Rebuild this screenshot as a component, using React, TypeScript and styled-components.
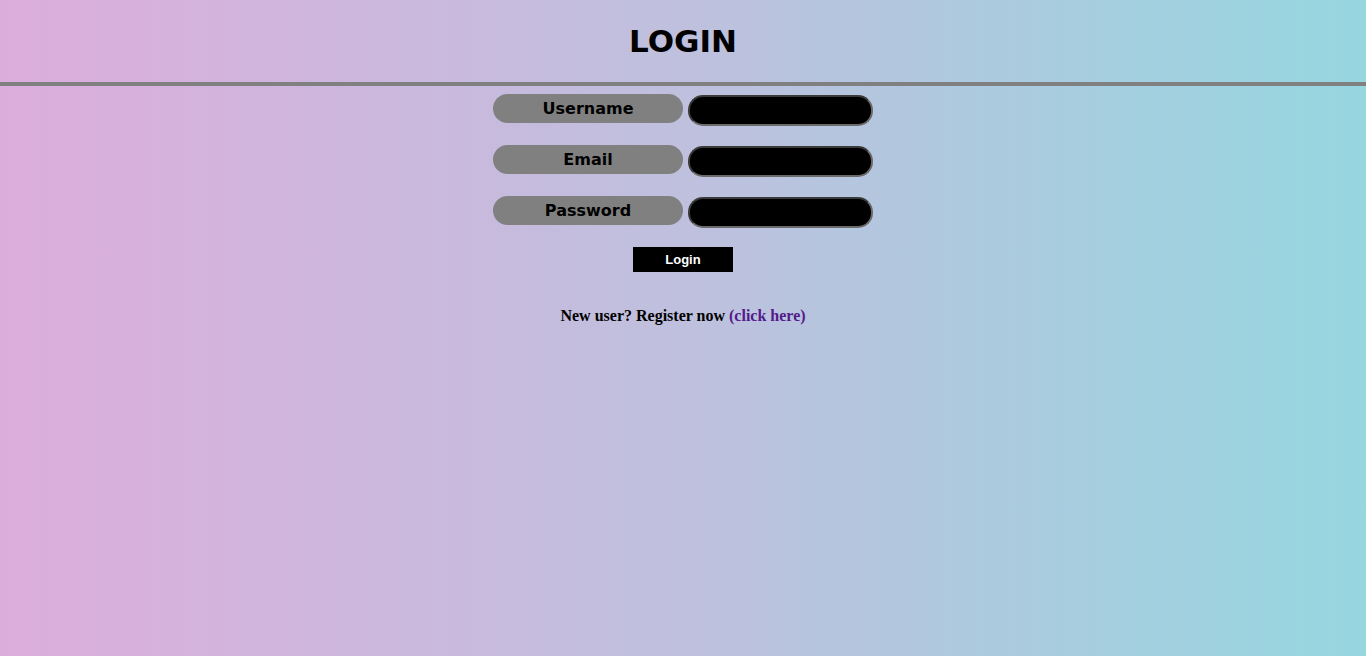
import React from "react";
import styled, { createGlobalStyle } from "styled-components";

const Global = createGlobalStyle`
  html, body { margin: 0; padding: 0; }
  body {
    min-height: 656px;
    background: linear-gradient(to right, #dcaddb, #bfc0de 50%, #96d7e0);
    font-family: "Liberation Serif", serif;
  }
`;

const Page = styled.div`
  min-height: 656px;
  display: flex;
  flex-direction: column;
  align-items: center;
`;

const Title = styled.h1`
  margin: 0;
  padding-top: 22px;
  height: 82px;
  box-sizing: border-box;
  font-family: "DejaVu Sans", sans-serif;
  font-weight: bold;
  font-size: 31px;
  letter-spacing: 0;
  color: #000;
  line-height: 38px;
`;

const Rule = styled.div`
  align-self: stretch;
  height: 4px;
  background: #808080;
`;

const Form = styled.form`
  display: flex;
  flex-direction: column;
  align-items: center;
  padding-top: 8px;
`;

const Row = styled.div`
  display: flex;
  align-items: flex-start;
  gap: 5px;
  height: 51px;
`;

const Label = styled.label`
  width: 190px;
  height: 29px;
  border-radius: 15px;
  background: #808080;
  color: #000;
  font-family: "DejaVu Sans", sans-serif;
  font-weight: bold;
  font-size: 16px;
  display: flex;
  align-items: center;
  justify-content: center;
`;

const Input = styled.input`
  margin-top: 1px;
  width: 185px;
  height: 31px;
  box-sizing: border-box;
  border-radius: 15px;
  background: #000;
  border: 2px solid #6a6a6a;
  border-top-color: #3a3a3a;
  border-left-color: #3a3a3a;
  color: #fff;
  outline: none;
`;

const Button = styled.button`
  width: 100px;
  height: 25px;
  background: #000;
  color: #fff;
  border: none;
  font-family: "Liberation Sans", sans-serif;
  font-weight: bold;
  font-size: 13px;
  padding: 0;
`;

const Note = styled.p`
  margin: 35px 0 0;
  font-family: "Liberation Serif", serif;
  font-weight: bold;
  font-size: 16px;
  color: #000;
`;

const Link = styled.a`
  color: #551a8b;
  text-decoration: none;
`;

export default function App() {
  return (
    <Page>
      <Global />
      <Title>LOGIN</Title>
      <Rule />
      <Form onSubmit={(e) => e.preventDefault()}>
        <Row>
          <Label>Username</Label>
          <Input type="text" />
        </Row>
        <Row>
          <Label>Email</Label>
          <Input type="email" />
        </Row>
        <Row>
          <Label>Password</Label>
          <Input type="password" />
        </Row>
        <Button type="submit">Login</Button>
        <Note>
          New user? Register now <Link href="#">(click here)</Link>
        </Note>
      </Form>
    </Page>
  );
}
